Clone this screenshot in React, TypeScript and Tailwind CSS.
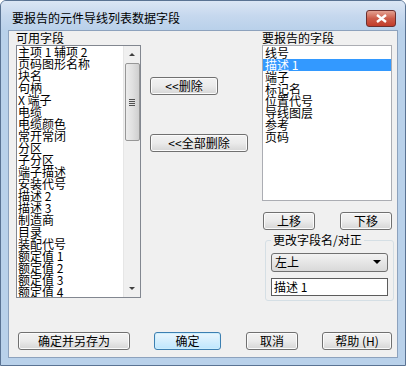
const font = { fontFamily: '"Noto Sans CJK SC", "DejaVu Sans", sans-serif' };

const available = [
  "主项 1 辅项 2",
  "页码图形名称",
  "块名",
  "句柄",
  "X 端子",
  "电缆",
  "电缆颜色",
  "常开常闭",
  "分区",
  "子分区",
  "端子描述",
  "安装代号",
  "描述 2",
  "描述 3",
  "制造商",
  "目录",
  "装配代号",
  "额定值 1",
  "额定值 2",
  "额定值 3",
  "额定值 4",
];

const reported = ["线号", "描述 1", "端子", "标记名", "位置代号", "导线图层", "参考", "页码"];

function WinButton({
  label,
  className = "",
  focused = false,
}: {
  label: string;
  className?: string;
  focused?: boolean;
}) {
  return (
    <button
      className={
        "h-[18px] rounded-[3px] border text-[12px] leading-[16px] text-black flex items-center justify-center " +
        (focused
          ? "border-[#3c7fb1] bg-gradient-to-b from-[#eaf6fd] to-[#bee6fd] shadow-[inset_0_0_0_1px_#cdeefd] "
          : "border-[#707070] bg-gradient-to-b from-[#f2f2f2] via-[#ebebeb] to-[#d6d6d6] shadow-[inset_0_0_0_1px_#fbfbfb] ") +
        className
      }
    >
      {label}
    </button>
  );
}

function ScrollBar() {
  return (
    <div className="w-[17px] h-full bg-[#f0f0f0] border-l border-[#e6e6e6] flex flex-col items-center">
      <div className="h-[17px] w-full flex items-center justify-center">
        <div className="w-0 h-0 border-l-[3px] border-r-[3px] border-b-[3px] border-l-transparent border-r-transparent border-b-[#404040]" />
      </div>
      <div className="w-[15px] h-[78px] rounded-[2px] border border-[#979797] bg-gradient-to-r from-[#ececec] via-[#e0e0e0] to-[#cfcfcf] flex flex-col items-center justify-center gap-[1px]">
        <div className="w-[6px] h-[1px] bg-[#505050]" />
        <div className="w-[6px] h-[1px] bg-[#505050]" />
        <div className="w-[6px] h-[1px] bg-[#505050]" />
        <div className="w-[6px] h-[1px] bg-[#505050]" />
      </div>
      <div className="flex-1" />
      <div className="h-[17px] w-full flex items-center justify-center">
        <div className="w-0 h-0 border-l-[3px] border-r-[3px] border-t-[3px] border-l-transparent border-r-transparent border-t-[#404040]" />
      </div>
    </div>
  );
}

export default function App() {
  return (
    <div
      className="w-[406px] h-[366px] bg-[#b9d1ea] rounded-t-[6px] border border-[#5a7393] flex flex-col overflow-hidden"
      style={font}
    >
      {/* title bar */}
      <div className="h-[29px] shrink-0 flex items-center justify-between pl-[11px] pr-[9px] bg-gradient-to-b from-[#dbe6f4] via-[#c6d8ee] to-[#b9d1ea]">
        <span className="text-[12px] leading-[12px] text-black pt-[4px]">要报告的元件导线列表数据字段</span>
        <div className="w-[30px] h-[17px] mt-[6px] rounded-[3px] border border-[#6b2f2f] bg-gradient-to-b from-[#e3a192] via-[#cc5c4a] to-[#c13b2a] flex items-center justify-center">
          <svg width="11" height="9" viewBox="0 0 11 9">
            <path d="M1 1 L10 8 M10 1 L1 8" stroke="#ffffff" strokeWidth="2.4" />
          </svg>
        </div>
      </div>

      {/* client area */}
      <div className="mx-[7px] h-[328px] bg-[#f0f0f0] border border-[#8da2bd] flex flex-col text-[12px] text-black">
        <div className="flex h-[270px] pl-[7px]">
          {/* left column */}
          <div className="w-[125px] flex flex-col">
            <div className="h-[14px] leading-[14px]">可用字段</div>
            <div className="h-[253px] border border-[#828790] bg-white flex">
              <div className="flex-1 flex flex-col pl-[1px] overflow-hidden">
                {available.map((t) => (
                  <div key={t} className="h-[12px] leading-[12px] whitespace-nowrap">
                    {t}
                  </div>
                ))}
              </div>
              <ScrollBar />
            </div>
          </div>

          {/* middle column */}
          <div className="w-[121px] flex flex-col pl-[9px] pt-[46px]">
            <WinButton label="<<删除" className="w-[68px]" />
            <WinButton label="<<全部删除" className="w-[98px] mt-[39px]" />
          </div>

          {/* right column */}
          <div className="w-[132px] flex flex-col">
            <div className="h-[14px] leading-[14px]">要报告的字段</div>
            <div className="w-[130px] h-[157px] border border-[#abadb3] bg-white flex flex-col pt-[1px]">
              {reported.map((t, i) => (
                <div
                  key={t}
                  className={
                    "h-[12px] leading-[12px] whitespace-nowrap px-[2px] " +
                    (i === 1 ? "bg-[#3399ff] text-white" : "")
                  }
                >
                  {t}
                </div>
              ))}
            </div>
            <div className="flex justify-between mt-[11px] pl-[1px] pr-[2px]">
              <WinButton label="上移" className="w-[52px]" />
              <WinButton label="下移" className="w-[52px]" />
            </div>
            <div className="mt-[10px] ml-[3px] w-[129px] h-[62px] rounded-[3px] border border-[#d5dfe5] flex flex-col px-[5px]">
              <div className="-mt-[8px] self-start bg-[#f0f0f0] px-[2px] leading-[14px]">更改字段名/对正</div>
              <div className="mt-[6px] h-[19px] rounded-[3px] border border-[#707070] bg-gradient-to-b from-[#f2f2f2] to-[#d9d9d9] flex items-center justify-between pl-[3px] pr-[6px]">
                <span className="leading-[14px]">左上</span>
                <div className="w-0 h-0 border-l-[4px] border-r-[4px] border-t-[4px] border-l-transparent border-r-transparent border-t-[#000]" />
              </div>
              <div className="mt-[6px] h-[18px] border border-[#5c5c5c] bg-white pl-[2px] leading-[16px]">描述 1</div>
            </div>
          </div>
        </div>

        {/* bottom buttons */}
        <div className="flex mt-[31px] pl-[9px]">
          <WinButton label="确定并另存为" className="w-[112px]" />
          <WinButton label="确定" focused className="w-[67px] ml-[24px]" />
          <WinButton label="取消" className="w-[52px] ml-[25px]" />
          <WinButton label="帮助 (H)" className="w-[70px] ml-[24px]" />
        </div>
      </div>
    </div>
  );
}
